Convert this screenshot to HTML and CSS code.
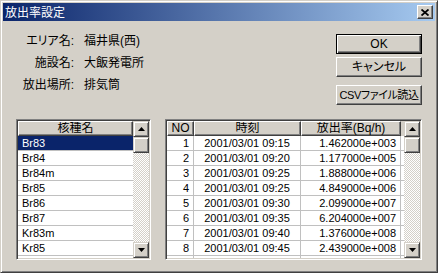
FILE: index.html
```html
<!DOCTYPE html>
<html lang="ja">
<head>
<meta charset="utf-8">
<title>放出率設定</title>
<link rel="stylesheet" href="styles.css">
</head>
<body>
<div class="window">
  <div class="titlebar">
    <span class="title">放出率設定</span>
    <div class="close"><svg width="8" height="7" viewBox="0 0 8 7"><path d="M0.5 0.5L7.5 6.5M7.5 0.5L0.5 6.5" stroke="#000" stroke-width="1.8" fill="none"/></svg></div>
  </div>
  <div class="content">
    <div class="top">
      <div class="info">
        <span class="lbl">エリア名:</span><span class="val">福井県(西)</span>
        <span class="lbl">施設名:</span><span class="val">大飯発電所</span>
        <span class="lbl">放出場所:</span><span class="val">排気筒</span>
      </div>
      <div class="buttons">
        <div class="btn default">OK</div>
        <div class="btn">キャンセル</div>
        <div class="btn csv">CSVファイル読込</div>
      </div>
    </div>
    <div class="bottom">
      <div class="frame list">
        <div class="grid">
          <div class="hrow"><div class="hcell c-name">核種名</div></div>
          <div class="row sel"><div class="cell c-name">Br83</div></div>
          <div class="row"><div class="cell c-name">Br84</div></div>
          <div class="row"><div class="cell c-name">Br84m</div></div>
          <div class="row"><div class="cell c-name">Br85</div></div>
          <div class="row"><div class="cell c-name">Br86</div></div>
          <div class="row"><div class="cell c-name">Br87</div></div>
          <div class="row"><div class="cell c-name">Kr83m</div></div>
          <div class="row"><div class="cell c-name">Kr85</div></div>
          <div class="row"><div class="cell c-name"></div></div>
        </div>
        <div class="vscroll">
          <div class="sbtn"><svg width="7" height="4" viewBox="0 0 7 4"><path d="M3.5 0L7 4H0z" fill="#000"/></svg></div>
          <div class="thumb"></div>
          <div class="sbtn down"><svg width="7" height="4" viewBox="0 0 7 4"><path d="M0 0H7L3.5 4z" fill="#000"/></svg></div>
        </div>
      </div>
      <div class="frame table">
        <div class="grid">
          <div class="hrow">
            <div class="hcell c-no">NO</div>
            <div class="hcell c-time">時刻</div>
            <div class="hcell c-rate">放出率(Bq/h)</div>
          </div>
          <div class="row"><div class="cell c-no">1</div><div class="cell c-time">2001/03/01 09:15</div><div class="cell c-rate">1.462000e+003</div></div>
          <div class="row"><div class="cell c-no">2</div><div class="cell c-time">2001/03/01 09:20</div><div class="cell c-rate">1.177000e+005</div></div>
          <div class="row"><div class="cell c-no">3</div><div class="cell c-time">2001/03/01 09:25</div><div class="cell c-rate">1.888000e+006</div></div>
          <div class="row"><div class="cell c-no">4</div><div class="cell c-time">2001/03/01 09:25</div><div class="cell c-rate">4.849000e+006</div></div>
          <div class="row"><div class="cell c-no">5</div><div class="cell c-time">2001/03/01 09:30</div><div class="cell c-rate">2.099000e+007</div></div>
          <div class="row"><div class="cell c-no">6</div><div class="cell c-time">2001/03/01 09:35</div><div class="cell c-rate">6.204000e+007</div></div>
          <div class="row"><div class="cell c-no">7</div><div class="cell c-time">2001/03/01 09:40</div><div class="cell c-rate">1.376000e+008</div></div>
          <div class="row"><div class="cell c-no">8</div><div class="cell c-time">2001/03/01 09:45</div><div class="cell c-rate">2.439000e+008</div></div>
          <div class="row"><div class="cell c-no"></div><div class="cell c-time"></div><div class="cell c-rate"></div></div>
        </div>
        <div class="vscroll">
          <div class="sbtn"><svg width="7" height="4" viewBox="0 0 7 4"><path d="M3.5 0L7 4H0z" fill="#000"/></svg></div>
          <div class="thumb"></div>
          <div class="sbtn down"><svg width="7" height="4" viewBox="0 0 7 4"><path d="M0 0H7L3.5 4z" fill="#000"/></svg></div>
        </div>
      </div>
    </div>
  </div>
</div>
</body>
</html>
```
FILE: styles.css
```css
* { box-sizing: border-box; }
html, body { margin: 0; padding: 0; }
body {
  background: #d4d0c8;
  font-family: "Liberation Sans", "Noto Sans CJK JP", sans-serif;
  font-size: 12px;
  color: #000;
  font-feature-settings: "palt";
}
.window {
  width: 438px;
  height: 273px;
  border: 1px solid;
  border-color: #d4d0c8 #404040 #404040 #d4d0c8;
  box-shadow: inset 1px 1px #fff, inset -1px -1px #808080;
  padding: 2px;
  display: flex;
  flex-direction: column;
  background: #d4d0c8;
}
.titlebar {
  height: 18px;
  flex: none;
  background: linear-gradient(to right, #0a246a, #a6caf0);
  display: flex;
  align-items: center;
  justify-content: space-between;
  padding: 0 2px;
}
.title {
  color: #fff;
  font-family: "Noto Sans CJK JP", sans-serif;
  font-size: 12px;
  line-height: 18px;
}
.close {
  width: 16px;
  height: 14px;
  background: #d4d0c8;
  border: 1px solid;
  border-color: #fff #404040 #404040 #fff;
  box-shadow: inset -1px -1px #808080;
  display: flex;
  align-items: center;
  justify-content: center;
}
.content {
  flex: 1;
  display: flex;
  flex-direction: column;
  padding: 0 13px 10px 13px;
}
.top {
  display: flex;
  justify-content: space-between;
  align-items: flex-start;
}
.info {
  display: grid;
  grid-template-columns: 58px auto;
  column-gap: 10px;
  padding-top: 9px;
  line-height: 22px;
}
.lbl { text-align: right; }
.buttons {
  display: flex;
  flex-direction: column;
  margin-top: 13px;
  width: 86px;
}
.btn {
  height: 20px;
  border: 1px solid;
  border-color: #fff #404040 #404040 #fff;
  box-shadow: inset -1px -1px #808080;
  display: flex;
  align-items: center;
  justify-content: center;
  line-height: 16px;
  white-space: nowrap;
}
.btn + .btn { margin-top: 3px; }
.btn.csv {
  margin-top: 8px;
  font-size: 11px;
  letter-spacing: -0.4px;
}
.btn.default {
  border-color: #000;
  box-shadow: inset 1px 1px #fff, inset -1px -1px #404040, inset -2px -2px #808080;
}
.bottom {
  margin-top: auto;
  display: flex;
  gap: 14px;
  height: 141px;
}
.frame {
  border: 1px solid;
  border-color: #808080 #fff #fff #808080;
  box-shadow: inset 1px 1px #404040, inset -1px -1px #d4d0c8;
  padding: 1px;
  display: flex;
  background: #fff;
}
.list { width: 135px; flex: none; }
.table { flex: 1; }
.grid {
  flex: 1;
  overflow: hidden;
  background: #fff;
  display: flex;
  flex-direction: column;
}
.hrow { display: flex; height: 15px; flex: none; background: #d4d0c8; }
.row {
  display: flex;
  height: 15px;
  flex: none;
  border-bottom: 1px solid #c0c0c0;
}
.cell {
  border-right: 1px solid #c0c0c0;
  line-height: 14px;
  font-size: 11px;
  padding: 0 4px;
  white-space: nowrap;
  overflow: hidden;
}
.c-name { width: 115px; text-align: left; }
.list .cell.c-name { border-right: none; }
.row.sel .cell { background: #0a246a; color: #fff; }
.c-no { width: 27px; text-align: right; }
.c-time { width: 107px; text-align: center; }
.c-rate { width: 100px; text-align: right; }
.hrow .hcell {
  background: #d4d0c8;
  border: 1px solid;
  border-color: #fff #404040 #404040 #fff;
  box-shadow: inset -1px -1px #808080;
  text-align: center;
  line-height: 13px;
  font-size: 12px;
  white-space: nowrap;
  overflow: hidden;
}
.vscroll {
  width: 16px;
  flex: none;
  display: flex;
  flex-direction: column;
  background: repeating-conic-gradient(#d4d0c8 0 25%, #fff 0 50%) 0 0 / 2px 2px;
}
.sbtn, .thumb {
  width: 16px;
  height: 16px;
  flex: none;
  background: #d4d0c8;
  border: 1px solid;
  border-color: #d4d0c8 #404040 #404040 #d4d0c8;
  box-shadow: inset 1px 1px #fff, inset -1px -1px #808080;
  display: flex;
  align-items: center;
  justify-content: center;
}
.sbtn.down { margin-top: auto; }
```
